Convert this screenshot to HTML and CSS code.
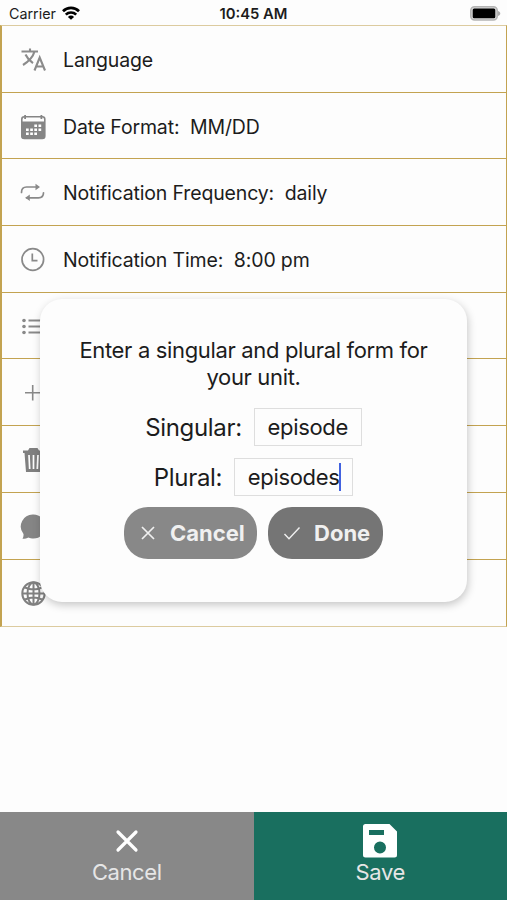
FILE: index.html
```html
<!DOCTYPE html>
<html lang="en">

<head>
    <meta charset="utf-8">
    <title>Settings</title>
    <link rel="stylesheet" href="styles.css">
</head>

<body>
    <div class="status-bar">
        <div class="carrier">
            <span>Carrier</span>
            <svg class="wifi" viewBox="0 0 18 14">
                <path d="M1 5.2a11.5 11.5 0 0 1 16 0M3.800 8.600a7.500 7.500 0 0 1 10.400 0" fill="none" stroke="#000" stroke-width="2.700"/>
                <path d="M9 13.800L5.900 10.900a4.400 4.400 0 0 1 6.200 0z"/>
            </svg>
        </div>
        <div class="time">10:45 AM</div>
        <svg class="battery" viewBox="0 0 31 15">
            <path d="M28 5c3 1 3 4 0 5z" fill="#aaa"/>
            <rect x=".8" y=".8" width="26.4" height="13.2" rx="3.8" fill="#ddd" stroke="#b4b4b4" stroke-width="1.6"/>
            <rect x="2.7" y="2.5" width="22.6" height="9.8" rx="1.5"/>
        </svg>
    </div>

    <div class="settings">
        <div class="row">
            <svg class="icon" viewBox="0 0 26 26">
                <g fill="none" stroke="#8b8b8b" stroke-width="2.1">
                    <path d="M1.500 4.500h16.500M10 1.500v3M14.500 4.500C13 10 8.500 14.500 3 18M5.500 7.500c1.600 3.500 4 6.200 7.500 8.700"/>
                    <path d="M14.500 23.500l5.200-13L25 23.500M16 19.500h7.500"/>
                </g>
            </svg>
            <span class="label">Language</span>
        </div>
        <div class="row">
            <svg class="icon" viewBox="0 0 26 26">
                <rect x="1.800" y="2.800" width="23" height="21.700" rx="2.500" fill="none" stroke="#858585" stroke-width="1.600"/>
                <path d="M1.500 7.500h23.500V22a3 3 0 0 1-3 3h-17.500a3 3 0 0 1-3-3zM4.200 1h1.800v4H4.200zM20.500 1h1.800v4h-1.800z" fill="#858585"/>
                <path d="M14.300 10.500h2.700v2.500h-2.700zM18.500 10.500h2.700v2.500h-2.700zM6 14.500h2.700v2.500H6zM10.200 14.500h2.700v2.500h-2.700zM14.300 14.500h2.700v2.500h-2.700zM18.500 14.500h2.700v2.500h-2.700zM6 18.500h2.700v2.500H6zM10.200 18.500h2.700v2.500h-2.700zM14.300 18.500h2.700v2.500h-2.700z" fill="#fff"/>
            </svg>
            <span class="label">Date Format:&nbsp; MM/DD</span>
        </div>
        <div class="row">
            <svg class="icon" viewBox="0 0 26 26">
                <path d="M1.500 12.500c0-3.500 1.800-5.500 5-5.500h11M23.500 12.800c0 3.200-1.800 5-5 5H6.500" fill="none" stroke="#898989" stroke-width="1.700" stroke-linecap="round"/>
                <path d="M15.500 3.800l4.500 3.200-4.500 3.200zM9.800 14.600l-4.500 3.200 4.500 3.200z" fill="#898989"/>
            </svg>
            <span class="label">Notification Frequency:&nbsp; daily</span>
        </div>
        <div class="row">
            <svg class="icon" viewBox="0 0 26 26">
                <g fill="none" stroke="#898989" stroke-width="1.700">
                    <circle cx="12.800" cy="12.500" r="10.800"/>
                    <path d="M12.300 6.500v7.200h5.200"/>
                </g>
            </svg>
            <span class="label">Notification Time:&nbsp; 8:00 pm</span>
        </div>
        <div class="row">
            <svg class="icon" viewBox="0 0 26 26">
                <g fill="#898989">
                    <circle cx="4" cy="6.500" r="1.800"/>
                    <circle cx="4" cy="12.500" r="1.800"/>
                    <circle cx="4" cy="18.500" r="1.800"/>
                    <path d="M8.500 5.400H25v2.200H8.500zM8.500 11.400H25v2.200H8.500zM8.500 17.400H25v2.200H8.500z"/>
                </g>
            </svg>
        </div>
        <div class="row">
            <svg class="icon" viewBox="0 0 26 26">
                <path d="M12.700 5v15.600M5 12.800h15.600" stroke="#898989" stroke-width="1.600"/>
            </svg>
        </div>
        <div class="row">
            <svg class="icon" viewBox="0 0 26 26">
                <path d="M9.500 1h8l1.500 2.500h5V6h-1.500L21 25H6L4.500 6H3V3.500h5z" fill="#808080"/>
                <path d="M9 8l.7 14M13.500 8v14M18 8l-.7 14" stroke="#fdfdfd" stroke-width="1.700"/>
            </svg>
        </div>
        <div class="row">
            <svg class="icon" viewBox="0 0 26 26">
                <path d="M13.500.5a12 12 0 1 1 0 24c-2 0-3.500-.4-5-1.100-1.500.9-3.500 1.300-6 1.300.8-1.400 1.200-2.800 1-4.700A12 12 0 0 1 13.500.5z" fill="#858585"/>
            </svg>
        </div>
        <div class="row">
            <svg class="icon" viewBox="0 0 26 26">
                <g fill="none" stroke="#808080" stroke-width="2">
                    <circle cx="13.500" cy="12.500" r="11.200"/>
                    <ellipse cx="13.500" cy="12.500" rx="6" ry="11"/>
                    <path d="M13.500 1.500v22M2.500 12.500h22M5 6.500c5 2.300 12 2.300 17 0M5 18.500c5-2.300 12-2.300 17 0"/>
                </g>
            </svg>
        </div>
    </div>

    <div class="footer">
        <div class="footer-button footer-cancel">
            <svg class="footer-icon" viewBox="0 0 36 36">
                <path d="M9 9l18 18M27 9L9 27" stroke="#fff" stroke-width="3.200" stroke-linecap="round"/>
            </svg>
            <span class="footer-label">Cancel</span>
        </div>
        <div class="footer-button footer-save">
            <svg class="footer-icon" viewBox="0 0 36 36">
                <path fill="#fff" fill-rule="evenodd" d="M3.500 1H27.500L35 8.500V32a2.500 2.500 0 0 1-2.500 2.500h-29A2.500 2.500 0 0 1 1 32V3.500A2.500 2.500 0 0 1 3.500 1zM7 7v5h15V7zM18 18.500a6 6 0 1 0 0 12 6 6 0 0 0 0-12z"/>
            </svg>
            <span class="footer-label">Save</span>
        </div>
    </div>

    <div class="dialog">
        <div class="message">Enter a singular and plural form for<br>your unit.</div>
        <div class="field">
            <span class="field-label">Singular:</span>
            <div class="input input-singular">episode</div>
        </div>
        <div class="field">
            <span class="field-label">Plural:</span>
            <div class="input input-plural">episodes<i class="caret"></i></div>
        </div>
        <div class="actions">
            <div class="button button-cancel">
                <svg class="button-icon" viewBox="0 0 18 18">
                    <path d="M3 3l12 12M15 3L3 15" stroke="#f0f0f0" stroke-width="1.700"/>
                </svg>
                <span>Cancel</span>
            </div>
            <div class="button button-done">
                <svg class="button-icon" viewBox="0 0 18 18">
                    <path d="M1.500 10l4.500 4.700L16.500 3.500" fill="none" stroke="#f0f0f0" stroke-width="1.400"/>
                </svg>
                <span>Done</span>
            </div>
        </div>
    </div>
</body>

</html>
```
FILE: styles.css
```css
* {
    box-sizing: border-box;
}

body {
    display: flex;
    flex-direction: column;
    position: relative;
    height: 900px;
    margin: 0;
    overflow: hidden;
    background: #fdfdfd;
    color: #1c1c1c;
    font-family: Inter, "Liberation Sans", sans-serif;
}

svg {
    display: block;
    flex: none;
}

.status-bar {
    display: grid;
    grid-template-columns: 1fr auto 1fr;
    align-items: center;
    height: 25px;
    padding: 2px 7px 0 9px;
    font-size: 14.3px;
    line-height: 22px;
}

.carrier {
    display: flex;
    align-items: center;
    gap: 6px;
}

.wifi {
    width: 18px;
    height: 14px;
    margin-top: -2px;
}

.time {
    margin-right: 2px;
    font-size: 14.8px;
    font-weight: 600;
}

.battery {
    justify-self: end;
    width: 31px;
    height: 15px;
    margin-right: -1px;
}

.settings {
    height: 602px;
    border: 1px solid #c3a351;
    border-left-width: 2px;
    border-top-color: #dccb9f;
    border-bottom-color: #dccb9f;
}

.row {
    display: flex;
    align-items: center;
    gap: 17px;
    height: 66.7px;
    padding-left: 18px;
    padding-top: 2px;
    border-bottom: 1px solid #c3a351;
}

.row:last-child {
    border-bottom: none;
}

.icon {
    width: 26px;
    height: 26px;
}

.label {
    font-size: 19.5px;
    letter-spacing: -.15px;
    white-space: nowrap;
}

.footer {
    display: flex;
    height: 88px;
    margin-top: auto;
}

.footer-button {
    display: flex;
    flex: 1;
    flex-direction: column;
    align-items: center;
    padding-top: 11px;
    color: #e6e6e6;
}

.footer-cancel {
    background: #888;
}

.footer-save {
    background: #196f5f;
}

.footer-icon {
    width: 36px;
    height: 36px;
}

.footer-label {
    font-size: 22px;
    letter-spacing: -.4px;
    line-height: 27px;
}

.dialog {
    position: absolute;
    top: 299px;
    left: 40px;
    width: 427px;
    height: 303px;
    padding-top: 38px;
    border-radius: 22px;
    background: #fdfdfd;
    box-shadow: 1px 3px 8px rgba(0, 0, 0, .22);
}

.message {
    font-size: 22px;
    letter-spacing: -.34px;
    line-height: 27px;
    text-align: center;
    white-space: nowrap;
}

.field {
    display: flex;
    justify-content: center;
    align-items: center;
    gap: 12px;
    height: 38px;
    margin-top: 17px;
    font-size: 24px;
    letter-spacing: -.33px;
}

.field + .field {
    margin-top: 12px;
}

.input {
    display: flex;
    align-items: center;
    justify-content: center;
    height: 38px;
    border: 1px solid #dedede;
    font-size: 22px;
}

.input-singular {
    width: 108px;
}

.input-plural {
    width: 119px;
}

.caret {
    width: 2px;
    height: 28px;
    margin-right: -2px;
    background: #4262e0;
}

.actions {
    display: flex;
    justify-content: center;
    gap: 11px;
    margin-top: 11px;
}

.button {
    display: flex;
    align-items: center;
    gap: 13px;
    height: 52px;
    padding-left: 15px;
    border-radius: 24px;
    color: #f0f0f0;
    font-size: 22px;
    font-weight: 700;
}

.button-cancel {
    width: 133px;
    background: #888;
}

.button-done {
    width: 115px;
    background: #757575;
}

.button-icon {
    width: 18px;
    height: 18px;
}
```
